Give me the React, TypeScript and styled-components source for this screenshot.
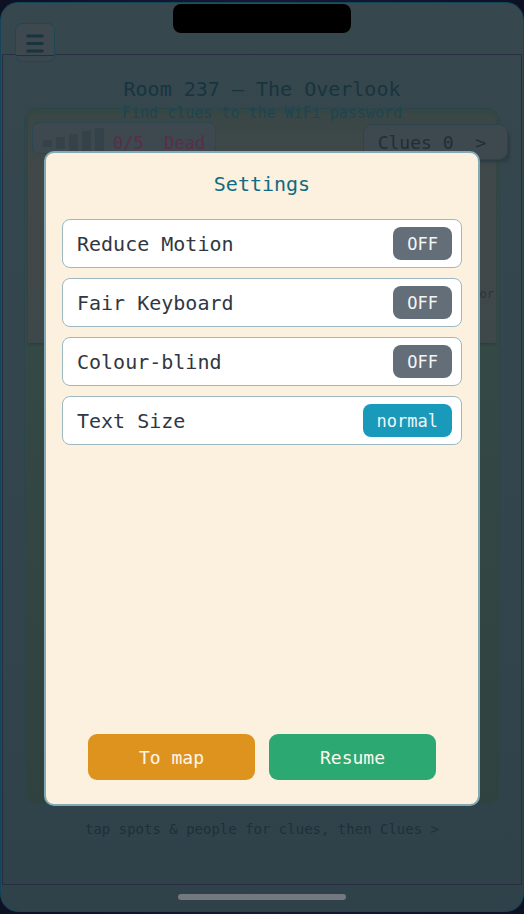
import React, { useState } from "react";
import styled, { createGlobalStyle } from "styled-components";

const GlobalStyle = createGlobalStyle`
  *, *::before, *::after { box-sizing: border-box; }
  body {
    margin: 0;
    background: #0c1224;
    font-family: "DejaVu Sans Mono", monospace;
  }
  h1, h2, p { margin: 0; font-weight: 400; }
  button { font-family: inherit; cursor: pointer; }
`;

const Page = styled.div`
  display: flex;
  min-height: 100vh;
  padding: 2px 0;
  background: linear-gradient(90deg, #0c1224, #121a35 50%, #0c1224);
`;

const Phone = styled.div`
  position: relative;
  display: flex;
  flex-direction: column;
  flex: 1;
  min-width: 0;
  border: 1px solid #144558;
  border-radius: 18px;
  background: linear-gradient(#36474d, #33464d 50%, #2f424a);
  overflow: hidden;
`;

const StatusBar = styled.header`
  display: flex;
  height: 51px;
  padding: 20px 14px 0;
`;

const MenuButton = styled.button`
  position: relative;
  z-index: 1;
  display: grid;
  place-items: center;
  flex: none;
  width: 40px;
  height: 39px;
  padding: 0;
  border: 1px solid #1d4854;
  border-radius: 7px;
  background: linear-gradient(#3e484f 31px, #282d42 31px, #282d42 32px, #3b474e 32px);
  color: #19343f;
`;

const Notch = styled.div`
  position: absolute;
  top: 1px;
  left: 50%;
  width: 178px;
  height: 29px;
  margin-left: -89px;
  border-radius: 8px;
  background: #000;
`;

const Game = styled.main`
  display: flex;
  flex-direction: column;
  flex: 1;
  margin: 0 1px;
  padding: 21px 21px 44px;
  border: 1px solid #282d42;
  text-align: center;
`;

const RoomTitle = styled.h1`
  font-size: 20px;
  line-height: 26px;
  color: #17353f;
`;

const Goal = styled.p`
  position: relative;
  z-index: 1;
  font-size: 15px;
  line-height: 22px;
  color: #1c4553;
`;

const Board = styled.section`
  display: flex;
  flex-direction: column;
  flex: 1;
  margin-top: -16px;
  padding: 4px 3px;
  border: 1px solid #2c444b;
  border-radius: 14px;
  background: linear-gradient(#344743, #344845 35%, #30423f);
`;

const Scene = styled.div`
  display: flex;
  flex-direction: column;
  height: 230px;
  padding: 9px 4px;
  border-radius: 10px 10px 0 0;
  background: linear-gradient(#3a4746, #41484a 30%, #3e4749);
  box-shadow: 0 2px 2px #2f4041;
`;

const Hud = styled.div`
  display: flex;
  justify-content: space-between;
  align-items: flex-start;
  margin-right: -16px;
`;

const Signal = styled.div`
  display: flex;
  align-items: flex-end;
  gap: 9px;
  height: 32px;
  padding: 0 10px;
  border: 1px solid #2c4652;
  border-radius: 7px;
  background: #3d484f;
  color: #592f47;
  font-size: 17px;
  line-height: 20px;
  white-space: pre;
`;

const CluesButton = styled.button`
  height: 36px;
  margin-top: 2px;
  padding: 0 21px 0 14px;
  border: 1px solid #2d444e;
  border-radius: 9px;
  background: #3e484f;
  box-shadow: 4px 4px 3px -2px #2b3b43;
  color: #202e38;
  font-size: 18px;
  white-space: pre;
`;

const SceneCaption = styled.p`
  margin-top: 126px;
  margin-right: -2px;
  text-align: right;
  font-size: 12px;
  line-height: 16px;
  color: #29343d;
`;

const Hint = styled.p`
  margin-top: 13px;
  font-size: 14px;
  line-height: 22px;
  color: #202f39;
`;

const HomeArea = styled.footer`
  display: flex;
  justify-content: center;
  align-items: flex-start;
  height: 26px;
  padding-top: 9px;
`;

const HomeBar = styled.div`
  width: 32%;
  height: 6px;
  border-radius: 3px;
  background: #73797e;
`;

const Overlay = styled.div`
  position: absolute;
  inset: 0;
  z-index: 2;
  display: flex;
  padding: 148px 43px 105px;
`;

const Dialog = styled.section`
  display: flex;
  flex-direction: column;
  flex: 1;
  min-width: 0;
  padding: 18px 16px 24px;
  border: 2px solid #83a9b5;
  border-radius: 10px;
  background: #fcf0de;
`;

const DialogTitle = styled.h2`
  font-size: 20px;
  line-height: 26px;
  text-align: center;
  color: #116b82;
`;

const Options = styled.div`
  display: flex;
  flex-direction: column;
  gap: 10px;
  margin-top: 22px;
`;

const OptionRow = styled.div`
  display: flex;
  align-items: center;
  justify-content: space-between;
  height: 49px;
  padding: 0 9px 0 14px;
  border: 1px solid #9cb9c2;
  border-radius: 8px;
  background: #fff;
`;

const OptionLabel = styled.label`
  font-size: 20px;
  color: #303743;
`;

const OptionButton = styled.button<{ $active: boolean }>`
  height: 33px;
  padding: 0 14px;
  border: 0;
  border-radius: 8px;
  background: ${(p) => (p.$active ? "#199abb" : "#646e79")};
  color: #f2f6f7;
  font-size: 17px;
`;

const Actions = styled.div`
  display: flex;
  gap: 14px;
  margin-top: auto;
  padding: 0 26px;
`;

const ActionButton = styled.button<{ $tone: "map" | "resume" }>`
  flex: 1;
  height: 46px;
  border: 0;
  border-radius: 9px;
  background: ${(p) => (p.$tone === "map" ? "#df931f" : "#2ca973")};
  color: #fdf7ec;
  font-size: 18px;
`;

const switches = ["Reduce Motion", "Fair Keyboard", "Colour-blind"];
const sizes = ["normal", "large"];

function MenuIcon() {
  return (
    <svg width="20" height="20" viewBox="0 0 20 20" aria-hidden="true">
      <path d="M2.7 3H17.3M2.7 10.5H17.3M2.7 18H17.3" stroke="currentColor" strokeWidth="3" strokeLinecap="round" />
    </svg>
  );
}

function SignalBars() {
  return (
    <svg width="61" height="25" viewBox="0 0 61 25" fill="#35424a" aria-hidden="true">
      <rect x="0" y="12" width="9" height="7" />
      <rect x="13" y="9" width="9" height="12" />
      <rect x="26" y="6" width="9" height="17" />
      <rect x="39" y="3" width="9" height="22" />
      <rect x="52" y="0" width="9" height="25" />
    </svg>
  );
}

export default function App() {
  const [on, setOn] = useState<Record<string, boolean>>({});
  const [size, setSize] = useState(0);

  return (
    <>
      <GlobalStyle />
      <Page>
        <Phone>
          <StatusBar>
            <MenuButton aria-label="Menu"><MenuIcon /></MenuButton>
          </StatusBar>
          <Notch />
          <Game>
            <RoomTitle>Room 237 — The Overlook</RoomTitle>
            <Goal>Find clues to the WiFi password</Goal>
            <Board>
              <Scene>
                <Hud>
                  <Signal><SignalBars />{"0/5  Dead"}</Signal>
                  <CluesButton>{"Clues 0  >"}</CluesButton>
                </Hud>
                <SceneCaption>or</SceneCaption>
              </Scene>
            </Board>
            <Hint>tap spots &amp; people for clues, then Clues &gt;</Hint>
          </Game>
          <HomeArea><HomeBar /></HomeArea>
          <Overlay>
            <Dialog role="dialog" aria-labelledby="settings-title">
              <DialogTitle id="settings-title">Settings</DialogTitle>
              <Options>
                {switches.map((name) => (
                  <OptionRow key={name}>
                    <OptionLabel htmlFor={name}>{name}</OptionLabel>
                    <OptionButton
                      id={name}
                      role="switch"
                      aria-checked={!!on[name]}
                      $active={!!on[name]}
                      onClick={() => setOn({ ...on, [name]: !on[name] })}
                    >
                      {on[name] ? "ON" : "OFF"}
                    </OptionButton>
                  </OptionRow>
                ))}
                <OptionRow>
                  <OptionLabel htmlFor="text-size">Text Size</OptionLabel>
                  <OptionButton id="text-size" $active onClick={() => setSize((size + 1) % sizes.length)}>
                    {sizes[size]}
                  </OptionButton>
                </OptionRow>
              </Options>
              <Actions>
                <ActionButton $tone="map">To map</ActionButton>
                <ActionButton $tone="resume">Resume</ActionButton>
              </Actions>
            </Dialog>
          </Overlay>
        </Phone>
      </Page>
    </>
  );
}
